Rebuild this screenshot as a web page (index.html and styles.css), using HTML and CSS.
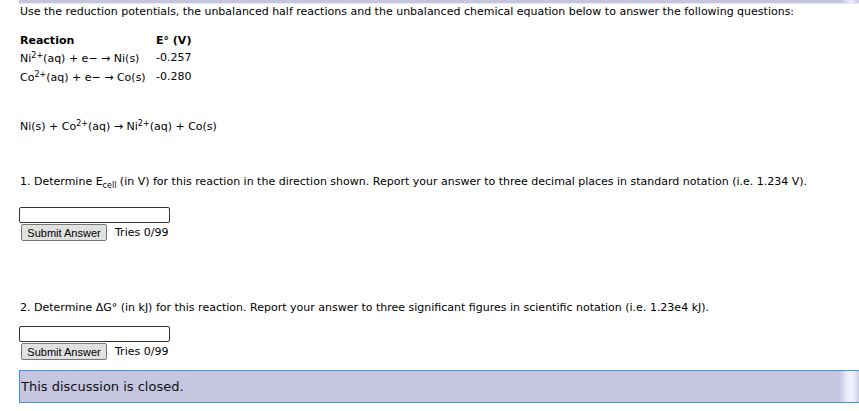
FILE: index.html
```html
<!DOCTYPE html>
<html>
<head>
<meta charset="utf-8">
<link rel="stylesheet" href="styles.css">
</head>
<body>
<div class="page">
  <div class="topbar"></div>
  <p class="intro">Use the reduction potentials, the unbalanced half reactions and the unbalanced chemical equation below to answer the following questions:</p>
  <table class="pot">
    <tr><th class="c1">Reaction</th><th>E° (V)</th></tr>
    <tr><td class="c1">Ni<sup>2+</sup>(aq) + e− → Ni(s)</td><td class="val">-0.257</td></tr>
    <tr><td class="c1">Co<sup>2+</sup>(aq) + e− → Co(s)</td><td class="val">-0.280</td></tr>
  </table>
  <p class="eq">Ni(s) + Co<sup>2+</sup>(aq) → Ni<sup>2+</sup>(aq) + Co(s)</p>
  <p class="q q1">1. Determine E<sub>cell</sub> (in V) for this reaction in the direction shown. Report your answer to three decimal places in standard notation (i.e. 1.234 V).</p>
  <div class="answer a1">
    <input class="field" type="text">
    <div class="row"><button class="btn">Submit Answer</button><span class="tries">Tries 0/99</span></div>
  </div>
  <p class="q q2">2. Determine ΔG° (in kJ) for this reaction. Report your answer to three significant figures in scientific notation (i.e. 1.23e4 kJ).</p>
  <div class="answer a2">
    <input class="field" type="text">
    <div class="row"><button class="btn">Submit Answer</button><span class="tries">Tries 0/99</span></div>
  </div>
  <div class="closed"><span>This discussion is closed.</span></div>
</div>
</body>
</html>
```
FILE: styles.css
```css
html, body { margin: 0; padding: 0; background: #fff; }
body { font-family: "DejaVu Sans", Verdana, sans-serif; font-size: 11px; color: #000; }
.page { padding-left: 19px; overflow: hidden; height: 411px; }
.topbar { height: 3px; background: linear-gradient(to right, #c5c5e0 0, #c5c5e0 calc(100% - 18px), #eeeeff calc(100% - 8px), #c8c8e0 100%); border-bottom: 1px solid #e8e8f4; }
.intro { margin: 0 0 0 1px; line-height: 15px; }
.pot { border-collapse: collapse; margin-top: 14px; margin-left: 0; }
.pot th, .pot td { padding: 0 1px; text-align: left; vertical-align: bottom; line-height: 15px; }
.pot th { font-weight: bold; padding-bottom: 2px; }
.pot td { padding-bottom: 3px; }
.pot td.val { padding-bottom: 4px; }
.pot .c1 { width: 134px; }
sup { font-size: 8px; line-height: 0; vertical-align: 4px; }
sub { font-size: 8px; line-height: 0; vertical-align: -3px; }
.eq { margin: 31px 0 0 1px; line-height: 15px; }
.q { margin: 0 0 0 1px; line-height: 15px; }
.q1 { margin-top: 40px; }
.q2 { margin-top: 59px; }
.a1 { margin-top: 18px; }
.a2 { margin-top: 11px; }
.field { display: block; box-sizing: border-box; width: 151px; height: 16px; margin: 0; padding: 0 2px; border: 1px solid #333; border-radius: 2px; background: #fff; font: 11px "DejaVu Sans", sans-serif; }
.row { display: flex; align-items: center; margin-top: 1px; padding-left: 2px; gap: 8px; }
.btn { box-sizing: border-box; height: 17px; width: 86px; margin: 0; padding: 0; font: 11px "Liberation Sans", Arial, sans-serif; color: #000; background: #e1e1e1; border: 1px solid #767676; border-radius: 2px; }
.tries { line-height: 15px; }
.closed { margin-top: 10px; height: 31px; border-top: 1px solid #4a8fd8; border-bottom: 1px solid #4a8fd8; border-left: 1px solid #4a8fd8; background: linear-gradient(to right, #c5c5e0 0, #c5c5e0 calc(100% - 20px), #f2f2ff calc(100% - 10px), #eeeeff calc(100% - 5px), #c8c8e0 100%); display: flex; align-items: center; font-size: 13px; color: #111; padding-left: 1px; }
```
